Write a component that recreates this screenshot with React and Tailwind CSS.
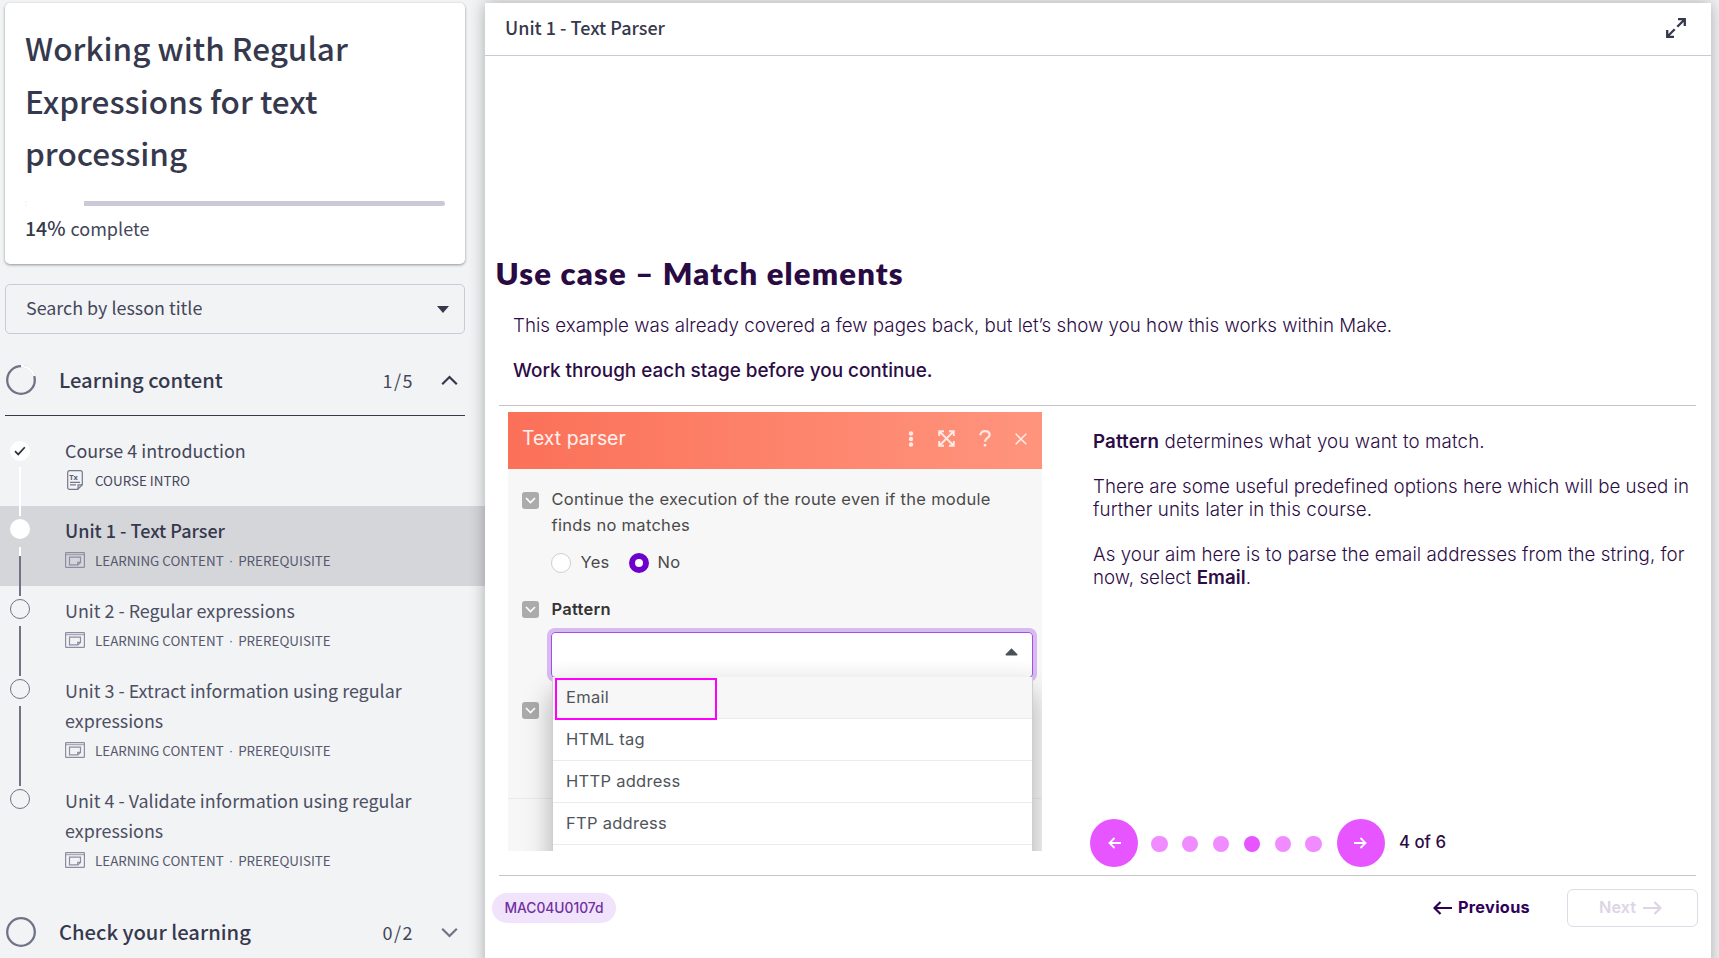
import React from "react";

const SANS = "font-['Noto_Sans_CJK_SC','Noto_Sans',sans-serif]";

function TextDocIcon() {
  return (
    <svg width="16" height="20" viewBox="0 0 16 20" fill="none" stroke="#74788c" strokeWidth="1.2" className="shrink-0">
      <path d="M2.500.7h11a1.800 1.800 0 0 1 1.800 1.800v12.300l-4.600 4.500H2.500A1.800 1.800 0 0 1 .7 17.500V2.500A1.800 1.800 0 0 1 2.500.7z" />
      <path d="M15.300 14.800h-4.200v4.500M3 12.300h10M3 14.900h6" />
      <text x="2.300" y="9.600" fontSize="7.500" fontWeight="700" fontFamily="Noto Sans, sans-serif" fill="#5b5f75" stroke="none">Tx</text>
    </svg>
  );
}

function LessonIcon() {
  return (
    <svg width="20" height="16" viewBox="0 0 20 16" fill="none" stroke="#8b8ea1" strokeWidth="1.2" className="shrink-0">
      <rect x=".6" y=".6" width="18.800" height="14.800" rx=".6" />
      <path d="M.6 2.700h18.800" strokeWidth=".9" />
      <path d="M4.500 5.200h11v5.200l-2.600 2.500H4.500z" />
      <path d="M15.500 10.400h-2.800v2.500" />
    </svg>
  );
}

function Arrow({ left, width = 19, height = 14, stroke = 2.2 }) {
  return (
    <svg width={width} height={height} viewBox={`0 0 ${width} ${height}`} fill="none" stroke="currentColor" strokeWidth={stroke} className={left ? "shrink-0" : "shrink-0 rotate-180"}>
      <path d={`M${height / 2 + 0.5} 1L1.500 ${height / 2}L${height / 2 + 0.5} ${height - 1}M1.500 ${height / 2}H${width}`} />
    </svg>
  );
}

function Chevron({ up, color }) {
  return (
    <svg width="17" height="11" viewBox="0 0 17 11" fill="none" stroke={color} strokeWidth="2.200" className={up ? "" : "rotate-180"}>
      <path d="M1.200 9.300L8.500 2l7.300 7.300" />
    </svg>
  );
}

function Section({ title, count, open, partial }) {
  return (
    <div className="flex h-[72px] items-center pl-[6px] pr-[27.5px]">
      <svg width="30" height="30" viewBox="0 0 30 30" fill="none" strokeWidth="2.300">
        <circle cx="15" cy="15" r="13.800" stroke="#6f7387" />
        {partial && <path d="M15 1.200A13.800 13.800 0 0 1 28.300 11" stroke="#fdfdfd" strokeWidth="2.800" />}
      </svg>
      <span className="ml-[23px] flex-1 text-[20.2px] font-medium leading-[30px] text-[#36394d]">{title}</span>
      <span className="mr-[26.5px] text-[18px] tracking-[1.5px] text-[#44475a]">{count}</span>
      <Chevron up={open} color={open ? "#36394d" : "#6f7387"} />
    </div>
  );
}

const ITEMS = [
  { title: "Course 4 introduction", meta: ["COURSE INTRO"], state: "done", lines: ["top-[41px] h-[49px] bg-white"] },
  { title: "Unit 1 - Text Parser", meta: ["LEARNING CONTENT", "PREREQUISITE"], state: "active", lines: ["top-[41px] h-[9px] bg-white", "top-[50px] h-[40px] bg-[#6f7387]"] },
  { title: "Unit 2 - Regular expressions", meta: ["LEARNING CONTENT", "PREREQUISITE"], lines: ["top-[40px] h-[50px] bg-[#6f7387]"] },
  { title: "Unit 3 - Extract information using regular expressions", meta: ["LEARNING CONTENT", "PREREQUISITE"], lines: ["top-[40px] h-[80px] bg-[#6f7387]"] },
  { title: "Unit 4 - Validate information using regular expressions", meta: ["LEARNING CONTENT", "PREREQUISITE"], lines: [] },
];

function Item({ title, meta, state, lines }) {
  const done = state === "done";
  const active = state === "active";
  return (
    <li className={`relative flex pb-[11px] pl-[10px] pt-[9px] ${active ? "bg-[#d5d6da]" : ""}`}>
      {lines.map((l) => (
        <span key={l} className={`absolute left-[19px] z-10 w-[2px] ${l}`} />
      ))}
      <div className={`flex size-5 shrink-0 items-center justify-center rounded-full ${done ? "mt-[6px] bg-white" : active ? "mt-1 bg-white" : "mt-1 border border-[#6f7387]"}`}>
        {done && (
          <svg width="12" height="10" viewBox="0 0 12 10" fill="none" stroke="#2c2f3e" strokeWidth="1.700">
            <path d="M1 5.200L4.200 8.400L10.800 1.200" />
          </svg>
        )}
      </div>
      <div className="ml-[35px] w-[370px]">
        <div className={`leading-[30px] ${active ? "text-[18px] font-medium text-[#36394d]" : done ? "text-[17.9px] text-[#44475a]" : "text-[17.9px] text-[#4c4f63]"}`}>{title}</div>
        <div className="flex h-[30px] items-center">
          <span className={`flex w-5 shrink-0 ${done ? "pl-[2px]" : ""}`}>{done ? <TextDocIcon /> : <LessonIcon />}</span>
          <span className={`ml-[10px] flex text-[13.4px] leading-[30px] ${done ? "text-[#44475a]" : "text-[#56596d]"}`}>
            {meta[0]}
            {meta[1] && <span className="mx-[5px] mt-px font-['Liberation_Sans',sans-serif]">·</span>}
            {meta[1]}
          </span>
        </div>
      </div>
    </li>
  );
}

function Sidebar() {
  return (
    <aside className={`flex w-[485px] shrink-0 flex-col pt-[3px] text-[#44475a] ${SANS}`}>
      <div className="ml-[5px] h-[261px] w-[460px] shrink-0 rounded-[5px] bg-white pl-5 pr-5 pt-[18px] shadow-[0_1px_3px_rgba(0,0,0,0.4)]">
        <h1 className="w-[360px] text-[31.5px] font-medium leading-[52.5px] text-[#36394d]">Working with Regular Expressions for text processing</h1>
        <div className="mt-[22px] h-[5px] overflow-hidden rounded-full bg-[#c9cad6]">
          <div className="h-full w-[59px] bg-white" />
        </div>
        <p className="mt-[7px] text-[18px] leading-[30px]"><b className="mr-[5px] text-[19.5px] font-medium text-[#36394d]">14%</b>complete</p>
      </div>
      <div className="ml-[5px] mt-5 flex h-[50px] w-[460px] shrink-0 items-center rounded-[5px] border border-[#c9cad6] pl-5 pr-[15px]">
        <span className="mb-[3px] flex-1 text-[17.9px]">Search by lesson title</span>
        <svg width="12" height="7" viewBox="0 0 12 7" fill="#36394d"><path d="M0 0h12L6 7z" /></svg>
      </div>
      <div className="mt-[10px] shrink-0"><Section title="Learning content" count="1/5" open partial /></div>
      <div className="ml-[5px] mt-[-1px] h-px w-[460px] shrink-0 bg-[#36394d]" />
      <ul className="mt-[10px] shrink-0">
        {ITEMS.map((it) => <Item key={it.title} {...it} />)}
      </ul>
      <div className="mt-[10px] shrink-0"><Section title="Check your learning" count="0/2" /></div>
    </aside>
  );
}

function Toggle() {
  return (
    <span className="flex h-[17px] w-[17px] shrink-0 items-center justify-center rounded-[3px] bg-[#ababab]">
      <svg width="11" height="7" viewBox="0 0 11 7" fill="none" stroke="#fff" strokeWidth="1.700"><path d="M1 1l4.500 4.500L10 1" /></svg>
    </span>
  );
}

function ParserDialog() {
  return (
    <div className="relative h-[439px] w-[534px] shrink-0 overflow-hidden bg-[#f7f7f7] text-[16.5px] tracking-[0.28px] text-[#4a4a4a]">
      <div className="flex h-[57px] items-center bg-gradient-to-r from-[#fb7058] to-[#ff947d] pb-1 pl-[14px] pr-[15.5px] text-[19.4px] tracking-normal text-white/90">
        <span className="flex-1">Text parser</span>
        <svg width="6" height="16" viewBox="0 0 6 16" fill="#ffe9e5"><circle cx="3" cy="2.500" r="2.200" /><circle cx="3" cy="8" r="2.200" /><circle cx="3" cy="13.500" r="2.200" /></svg>
        <svg className="ml-6" width="17" height="17" viewBox="0 0 17 17" fill="none" stroke="#ffe9e5" strokeWidth="1.900"><path d="M2 2l13 13M15 2L2 15M6 1.200H1.200V6M11 1.200h4.800V6M1.200 11v4.800H6M15.800 11v4.800H11" /></svg>
        <svg className="ml-[23.5px]" width="12" height="17" viewBox="0 0 12 17" fill="none" stroke="#ffe9e5" strokeWidth="2.200"><path d="M1.400 5.200C1.400 2.700 3.300 1.200 6 1.200s4.600 1.500 4.600 3.800C10.600 8 6 8 6 11.800" /><path d="M6 14v2.400" strokeWidth="2.500" /></svg>
        <svg className="ml-[24px]" width="12" height="12" viewBox="0 0 12 12" fill="none" stroke="#ffe9e5" strokeWidth="1.600"><path d="M.7.7l10.600 10.600M11.300.7L.7 11.300" /></svg>
      </div>
      <div className="pl-[14px] pt-[18px]">
        <div className="flex items-start">
          <div className="pt-[5px]"><Toggle /></div>
          <p className="ml-[12.5px] w-[460px] leading-[25.5px]">Continue the execution of the route even if the module finds no matches</p>
        </div>
        <div className="ml-[29px] mt-[12.500px] flex h-6 items-center">
          <span className="size-5 rounded-full border border-[#cfcfcf] bg-white" />
          <span className="ml-[9.5px]">Yes</span>
          <span className="ml-[19px] size-5 rounded-full border-[6px] border-[#6d00cc] bg-white" />
          <span className="ml-[9px]">No</span>
        </div>
        <div className="mt-[22.5px] flex h-6 items-center">
          <Toggle />
          <b className="ml-[12.5px] font-semibold text-[#333]">Pattern</b>
        </div>
        <div className="ml-[29px] mt-[11px] flex h-[46px] w-[482px] items-start justify-end rounded-[4px] border-[1.5px] border-[#a64df0] bg-linear-to-b from-white from-60% to-[#f7f7f7] pr-[14.5px] pt-[15px] shadow-[0_0_0_4px_#d6bbee]">
          <svg width="13" height="8" viewBox="0 0 13 8" fill="#4b5158"><path d="M6.500 0.300l5.900 5.900q.3 1.400-.9 1.400H1.500Q.300 7.600.600 6.200z" /></svg>
        </div>
        <div className="mt-[24px] flex h-[17px]"><Toggle /></div>
      </div>
      <div className="mt-[79px] h-px bg-[#ebebeb]" />
      <ul className="absolute left-[43.5px] top-[265px] z-10 w-[481.5px] border-x border-[#cfcfcf] bg-white text-[#4f555b] shadow-[0_16px_26px_rgba(0,0,0,0.3)]">
        {["Email", "HTML tag", "HTTP address", "FTP address", ""].map((o) => (
          <li key={o} className={`flex h-[42px] items-center border-b border-[#ebebeb] pl-[13.5px] ${o === "Email" ? "bg-[#f7f7f7]" : ""}`}>{o}</li>
        ))}
      </ul>
      <div className="absolute left-[47px] top-[266px] z-20 h-[42px] w-[162px] border-2 border-[#ff00ff]" />
    </div>
  );
}

function Pager() {
  return (
    <div className="flex h-[49px] items-center text-[16.8px] font-medium text-[#2d0c46]">
      <button className="flex size-12 items-center justify-center rounded-full bg-[#e655ff] text-white"><Arrow left width={13} height={12} stroke={1.8} /></button>
      <div className="ml-[13px] mr-[15px] mt-[3px] flex gap-[14.4px]">
        {[1, 2, 3, 4, 5, 6].map((n) => (
          <span key={n} className={`size-[16.5px] rounded-full ${n === 4 ? "bg-[#e655ff]" : "bg-[#f08cff]"}`} />
        ))}
      </div>
      <button className="flex size-12 items-center justify-center rounded-full bg-[#e655ff] text-white"><Arrow width={13} height={12} stroke={1.8} /></button>
      <span className="ml-[14px]">4 of 6</span>
    </div>
  );
}

export default function App() {
  return (
    <div className="flex h-[958px] w-[1719px] overflow-hidden bg-[#f2f3f5] font-['Inter',sans-serif]">
      <Sidebar />
      <main className="relative z-20 mt-[3px] flex h-[970px] w-[1226px] flex-col bg-white text-[#2d0c46] shadow-[0_0_15px_rgba(0,0,0,0.3)]">
        <header className={`flex h-[53px] shrink-0 items-center border-b border-[#c9cad6] pb-[2px] pl-5 pr-[25px] text-[#36394d] ${SANS}`}>
          <h2 className="flex-1 pb-[2px] text-[18px] font-medium">Unit 1 - Text Parser</h2>
          <svg width="20" height="20" viewBox="0 0 20 20" fill="none" stroke="#36394d" strokeWidth="2.300"><path d="M12 1.200h6.800V8M18.800 1.200L11.300 8.700M8 18.800H1.200V12M1.200 18.800L8.700 11.300" /></svg>
        </header>
        <h3 className="mt-[195px] pl-[10.5px] font-['Lato',sans-serif] text-[31px] font-extrabold leading-[44px] tracking-[1.18px] text-[#2a0a42]">Use case – Match elements</h3>
        <p className="mt-[19px] pl-[28px] text-[18.75px] font-light leading-[23px]">This example was already covered a few pages back, but let’s show you how this works within Make.</p>
        <p className="mt-[22px] pl-[28px] text-[18.9px] font-medium leading-[23px]">Work through each stage before you continue.</p>
        <div className="ml-[14px] mr-[15px] mt-[23px] h-px shrink-0 bg-[#c8c4c8]" />
        <div className="mt-[6px] flex h-[456px] shrink-0 items-start pl-[23px]">
          <ParserDialog />
          <div className="ml-[51px] flex h-[455px] flex-col">
            <div className="flex-1 pt-[18px] text-[18.72px] font-light leading-[23px]">
              <p className="tracking-[0.14px]"><b className="font-semibold">Pattern</b> determines what you want to match.</p>
              <p className="mt-[22px] w-[602px]">There are some useful predefined options here which will be used in <span className="tracking-[0.12px]">further units later in this course.</span></p>
              <p className="mt-[22px] w-[602px] tracking-[0.05px]">As your aim here is to parse the email addresses from the string, for now, select <b className="font-semibold">Email</b>.</p>
            </div>
            <div className="-ml-[3px]"><Pager /></div>
          </div>
        </div>
        <div className="ml-[14px] mr-[15px] mt-[7px] h-px shrink-0 bg-[#c8c4c8]" />
        <footer className="mt-[12px] flex h-[39px] shrink-0 items-center pl-[7px] pr-[13.5px]">
          <span className="flex h-[30px] w-[124px] items-center justify-center rounded-full bg-[#f0e3fb] pt-px text-[13.8px] font-medium text-[#7230a0]">MAC04U0107d</span>
          <div className="flex-1" />
          <button className="flex items-center gap-[6px] text-[16.3px] font-bold tracking-[0.3px] text-[#2f0058]"><Arrow left />Previous</button>
          <button className="ml-[36.5px] flex h-[38px] w-[131px] items-center justify-center gap-[7px] rounded-[6px] border-[1.5px] border-[#e0dae6] pr-[3px] text-[16.3px] font-semibold text-[#ddd5e6]">Next<Arrow /></button>
        </footer>
      </main>
    </div>
  );
}
